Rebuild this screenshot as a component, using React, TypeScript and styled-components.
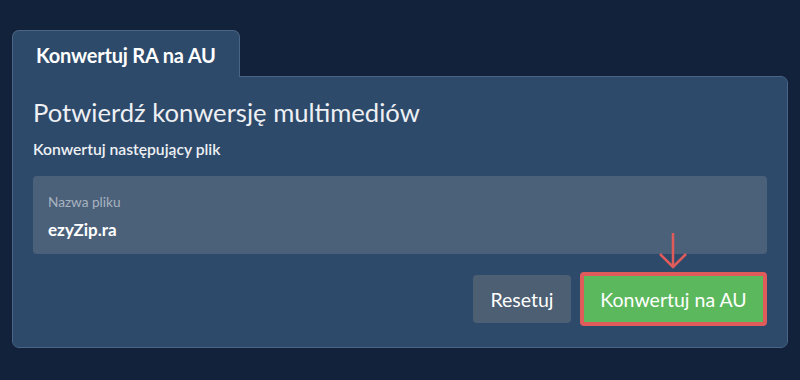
import React from "react";
import styled, { createGlobalStyle } from "styled-components";

const GlobalStyle = createGlobalStyle`
  html, body {
    margin: 0;
    padding: 0;
    background: #12223a;
    font-family: Lato, "Open Sans", sans-serif;
  }
`;

const Page = styled.div`
  width: 800px;
  height: 380px;
  box-sizing: border-box;
  padding: 30px 12px 0 12px;
  background: #12223a;
`;

const Tabs = styled.div`
  display: flex;
  position: relative;
  z-index: 1;
  margin-bottom: -1px;
`;

const Tab = styled.div`
  box-sizing: border-box;
  width: 228px;
  height: 47px;
  padding: 12px 0 0 23px;
  background: #2d4a6b;
  border: 1px solid #4a6485;
  border-bottom: none;
  border-radius: 7px 7px 0 0;
  color: #ffffff;
  font-size: 20px;
  font-weight: 700;
  letter-spacing: -0.2px;
`;

const Panel = styled.div`
  box-sizing: border-box;
  height: 272px;
  padding: 18px 20px 0 20px;
  background: #2d4a6b;
  border: 1px solid #4a6485;
  border-radius: 0 7px 7px 7px;
`;

const Heading = styled.h1`
  margin: 0;
  color: #eef0f3;
  font-size: 25.6px;
  font-weight: 400;
  line-height: 34px;
`;

const Subtitle = styled.p`
  margin: 10px 0 0 0;
  color: #eef0f3;
  font-size: 15.7px;
  font-weight: 600;
  line-height: 20px;
`;

const FileBox = styled.div`
  box-sizing: border-box;
  height: 78px;
  margin-top: 17px;
  padding: 18px 18px 0 15px;
  background: #4b617a;
  border-radius: 4px;
  display: flex;
  flex-direction: column;
  gap: 9px;
`;

const FileLabel = styled.span`
  color: #a8b3c0;
  font-size: 13.6px;
  line-height: 17px;
`;

const FileName = styled.span`
  color: #ffffff;
  font-size: 17px;
  font-weight: 700;
  line-height: 20px;
`;

const Actions = styled.div`
  display: flex;
  justify-content: flex-end;
  align-items: center;
  gap: 9px;
  margin-top: 18px;
`;

const Button = styled.button<{ $variant: "reset" | "primary" }>`
  box-sizing: border-box;
  font-family: Lato, "Open Sans", sans-serif;
  font-size: 19.5px;
  font-weight: 400;
  color: #ffffff;
  border-radius: 4px;
  cursor: pointer;
  padding: 0;
  background: ${({ $variant }) => ($variant === "primary" ? "#5cb85c" : "#4d5f73")};
  border: ${({ $variant }) => ($variant === "primary" ? "4px solid #e05c5a" : "none")};
  height: ${({ $variant }) => ($variant === "primary" ? "54px" : "48px")};
  width: ${({ $variant }) => ($variant === "primary" ? "187px" : "98px")};
`;

const ArrowWrap = styled.div`
  position: relative;
`;

const Arrow = styled.svg`
  position: absolute;
  left: 76px;
  top: -40px;
`;

export default function App() {
  return (
    <Page>
      <GlobalStyle />
      <Tabs>
        <Tab>Konwertuj RA na AU</Tab>
      </Tabs>
      <Panel>
        <Heading>Potwierdź konwersję multimediów</Heading>
        <Subtitle>Konwertuj następujący plik</Subtitle>
        <FileBox>
          <FileLabel>Nazwa pliku</FileLabel>
          <FileName>ezyZip.ra</FileName>
        </FileBox>
        <Actions>
          <Button $variant="reset">Resetuj</Button>
          <ArrowWrap>
            <Arrow width="34" height="38" viewBox="0 0 34 38">
              <path d="M17 1 V35 M4 22 L17 35 L30 22" stroke="#e05c5a" strokeWidth="2.5" fill="none" />
            </Arrow>
            <Button $variant="primary">Konwertuj na AU</Button>
          </ArrowWrap>
        </Actions>
      </Panel>
    </Page>
  );
}
